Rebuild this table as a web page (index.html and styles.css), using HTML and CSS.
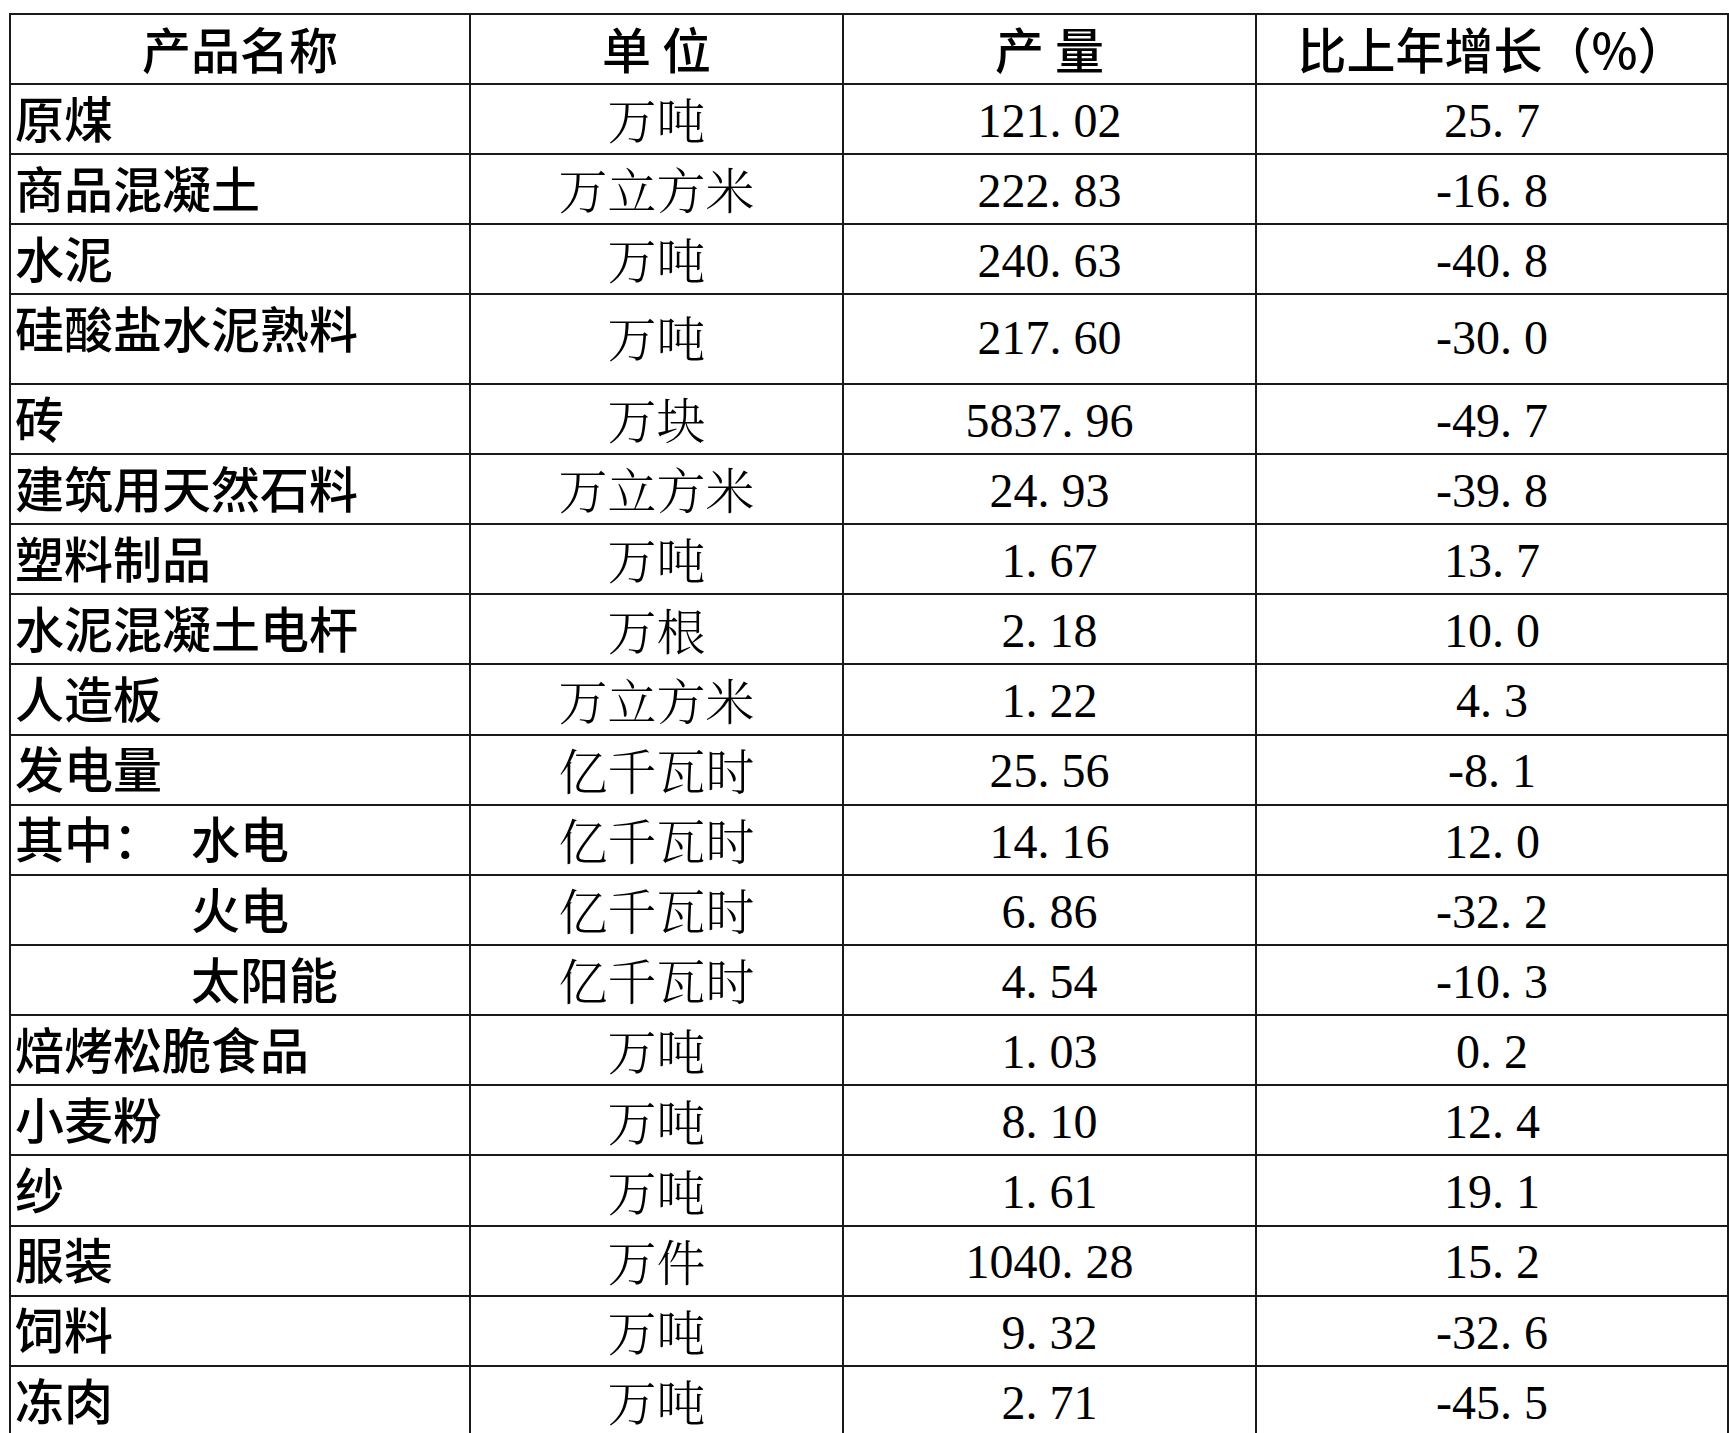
FILE: index.html
```html
<!DOCTYPE html>
<html lang="zh-CN">
<head>
<meta charset="utf-8">
<title>主要工业产品产量</title>
<link rel="stylesheet" href="styles.css">
</head>
<body>
<div class="page">
<table class="prod">
<colgroup>
<col class="w-name"><col class="w-unit"><col class="w-qty"><col class="w-grow">
</colgroup>
<thead>
<tr><th>产品名称</th><th>单 位</th><th>产 量</th><th>比上年增长（%）</th></tr>
</thead>
<tbody>
<tr><td class="name">原煤</td><td class="unit">万吨</td><td class="num">121<span class="dot">.</span>02</td><td class="num">25<span class="dot">.</span>7</td></tr>
<tr><td class="name">商品混凝土</td><td class="unit">万立方米</td><td class="num">222<span class="dot">.</span>83</td><td class="num">-16<span class="dot">.</span>8</td></tr>
<tr><td class="name">水泥</td><td class="unit">万吨</td><td class="num">240<span class="dot">.</span>63</td><td class="num">-40<span class="dot">.</span>8</td></tr>
<tr class="tall"><td class="name top">硅酸盐水泥熟料</td><td class="unit">万吨</td><td class="num">217<span class="dot">.</span>60</td><td class="num">-30<span class="dot">.</span>0</td></tr>
<tr><td class="name">砖</td><td class="unit">万块</td><td class="num">5837<span class="dot">.</span>96</td><td class="num">-49<span class="dot">.</span>7</td></tr>
<tr><td class="name">建筑用天然石料</td><td class="unit">万立方米</td><td class="num">24<span class="dot">.</span>93</td><td class="num">-39<span class="dot">.</span>8</td></tr>
<tr><td class="name">塑料制品</td><td class="unit">万吨</td><td class="num">1<span class="dot">.</span>67</td><td class="num">13<span class="dot">.</span>7</td></tr>
<tr><td class="name">水泥混凝土电杆</td><td class="unit">万根</td><td class="num">2<span class="dot">.</span>18</td><td class="num">10<span class="dot">.</span>0</td></tr>
<tr><td class="name">人造板</td><td class="unit">万立方米</td><td class="num">1<span class="dot">.</span>22</td><td class="num">4<span class="dot">.</span>3</td></tr>
<tr><td class="name">发电量</td><td class="unit">亿千瓦时</td><td class="num">25<span class="dot">.</span>56</td><td class="num">-8<span class="dot">.</span>1</td></tr>
<tr><td class="name"><span class="lead">其中：</span>水电</td><td class="unit">亿千瓦时</td><td class="num">14<span class="dot">.</span>16</td><td class="num">12<span class="dot">.</span>0</td></tr>
<tr><td class="name"><span class="lead"></span>火电</td><td class="unit">亿千瓦时</td><td class="num">6<span class="dot">.</span>86</td><td class="num">-32<span class="dot">.</span>2</td></tr>
<tr><td class="name"><span class="lead"></span>太阳能</td><td class="unit">亿千瓦时</td><td class="num">4<span class="dot">.</span>54</td><td class="num">-10<span class="dot">.</span>3</td></tr>
<tr><td class="name">焙烤松脆食品</td><td class="unit">万吨</td><td class="num">1<span class="dot">.</span>03</td><td class="num">0<span class="dot">.</span>2</td></tr>
<tr><td class="name">小麦粉</td><td class="unit">万吨</td><td class="num">8<span class="dot">.</span>10</td><td class="num">12<span class="dot">.</span>4</td></tr>
<tr><td class="name">纱</td><td class="unit">万吨</td><td class="num">1<span class="dot">.</span>61</td><td class="num">19<span class="dot">.</span>1</td></tr>
<tr><td class="name">服装</td><td class="unit">万件</td><td class="num">1040<span class="dot">.</span>28</td><td class="num">15<span class="dot">.</span>2</td></tr>
<tr><td class="name">饲料</td><td class="unit">万吨</td><td class="num">9<span class="dot">.</span>32</td><td class="num">-32<span class="dot">.</span>6</td></tr>
<tr><td class="name">冻肉</td><td class="unit">万吨</td><td class="num">2<span class="dot">.</span>71</td><td class="num">-45<span class="dot">.</span>5</td></tr>
</tbody>
</table>
</div>
</body>
</html>
```
FILE: styles.css
```css
html, body {
  margin: 0;
  padding: 0;
  background: #ffffff;
}

.page {
  padding: 13px 0 0 9px;
}

.prod {
  border-collapse: collapse;
  table-layout: fixed;
  width: 1718px;
  color: #000000;
}

.w-name { width: 460px; }
.w-unit { width: 373px; }
.w-qty  { width: 413px; }
.w-grow { width: 472px; }

.prod th,
.prod td {
  border: 2px solid #1a1a1a;
  padding: 0;
  vertical-align: middle;
  white-space: nowrap;
}

.prod th {
  font-family: "Noto Sans CJK SC", sans-serif;
  font-weight: 500;
  font-size: 49px;
  line-height: 1.2;
  text-align: center;
  padding-bottom: 1px;
  height: 67px;
}

.name {
  font-family: "Noto Sans CJK SC", sans-serif;
  font-weight: 500;
  font-size: 49px;
  line-height: 1.2;
  text-align: left;
  padding-left: 4px !important;
  padding-bottom: 4px !important;
  height: 64.15px;
}

.lead {
  display: inline-block;
  width: 176px;
}

.unit {
  font-family: "Noto Serif CJK SC", "Noto Sans CJK SC", serif;
  font-weight: 300;
  font-size: 49px;
  line-height: 1.2;
  text-align: center;
  padding-bottom: 1px !important;
  height: 67.15px;
}

.num {
  font-family: "Liberation Serif", serif;
  font-size: 48px;
  line-height: 1.2;
  text-align: center;
  padding-top: 3px !important;
  height: 65.15px;
}

.dot {
  letter-spacing: 12px;
}

.tall .name.top {
  vertical-align: top;
  padding-top: 3px !important;
  padding-bottom: 0 !important;
  height: 84.5px;
}

.tall .unit {
  padding-bottom: 5px !important;
  height: 82.5px;
}

.tall .num {
  padding-top: 0 !important;
  padding-bottom: 2px !important;
  height: 85.5px;
}
```
